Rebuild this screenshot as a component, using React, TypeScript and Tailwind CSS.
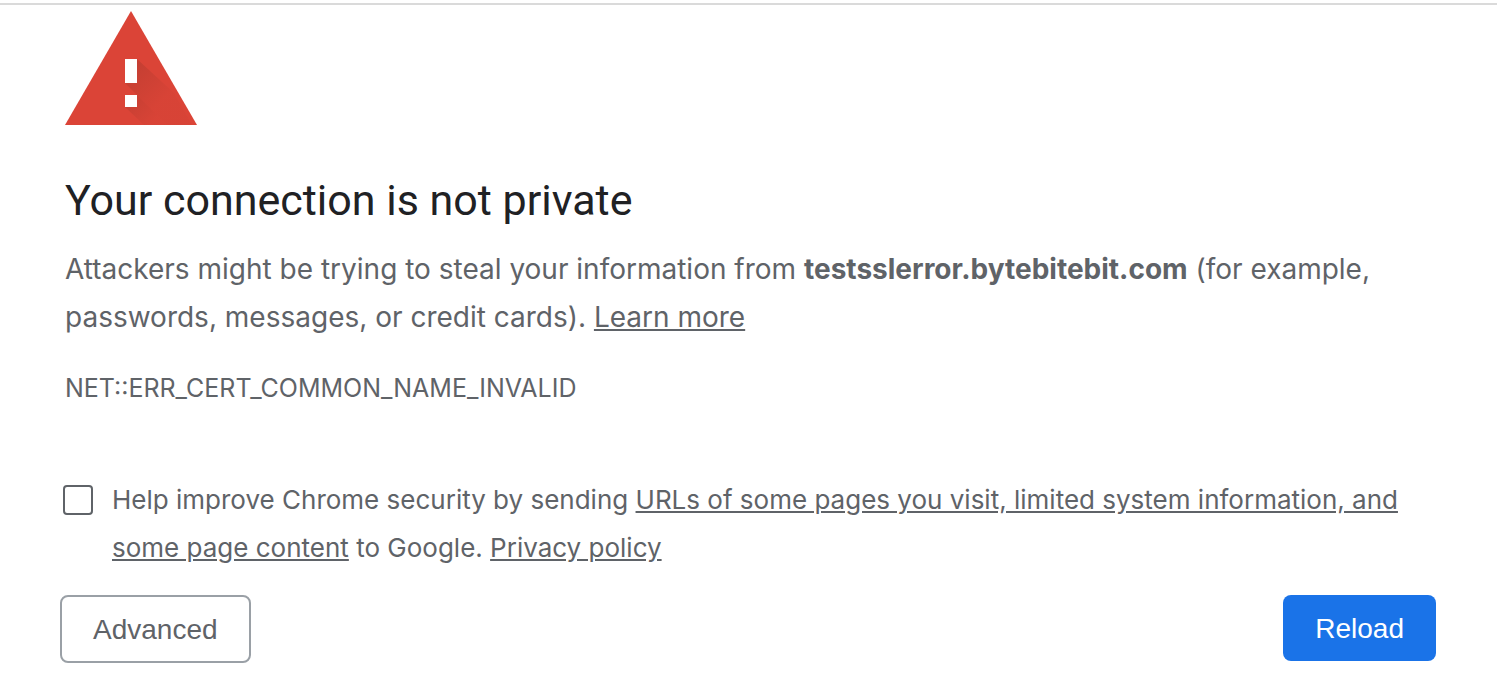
export default function App() {
  return (
    <div className="min-h-screen bg-white pt-[3px] font-['Inter',sans-serif] text-[#5f6368]">
      <main className="border-t-2 border-[#dadada] pl-[60px] pr-[61px] pt-[6px]">
        <div className="pl-[5px]">
          <svg className="h-[114px] w-[132px]" viewBox="0 0 132 114" role="img" aria-label="Warning">
            <defs>
              <linearGradient id="shade" gradientUnits="userSpaceOnUse" x1="66" y1="60" x2="96" y2="90">
                <stop offset="0" stopColor="#b03a2e" stopOpacity="0.5" />
                <stop offset="1" stopColor="#b03a2e" stopOpacity="0.08" />
              </linearGradient>
              <linearGradient id="shadeDot" gradientUnits="userSpaceOnUse" x1="66" y1="88" x2="88" y2="110">
                <stop offset="0" stopColor="#b03a2e" stopOpacity="0.45" />
                <stop offset="1" stopColor="#b03a2e" stopOpacity="0.05" />
              </linearGradient>
            </defs>
            <path d="M66 0 132 114H0Z" fill="#db4437" />
            <path d="M72 48 109 82 127 114H102L60 72Z" fill="url(#shade)" />
            <path d="M72 84 102 114H79L60 96Z" fill="url(#shadeDot)" />
            <path d="M60 48h12v24H60zM60 84h12v12H60z" fill="#fff" />
          </svg>
          <h1 className="mt-[47px] font-['Roboto',sans-serif] text-[43px] leading-[56px] text-[#202124]">Your connection is not private</h1>
          <p className="mt-[17px] text-[28px] leading-[48px]">
            Attackers might be trying to steal your information from <strong>testsslerror.bytebitebit.com</strong> (for example, passwords, messages, or credit cards).{" "}
            <a href="#learn" className="underline">Learn more</a>
          </p>
          <p className="mt-[23px] text-[25px] leading-[48px]">NET::ERR_CERT_COMMON_NAME_INVALID</p>
        </div>
        <div className="mt-16 flex pl-[3px]">
          <input id="help" type="checkbox" className="mt-[9px] size-[30px] shrink-0 appearance-none rounded-[4px] border-2 border-[#5f6368]" />
          <label htmlFor="help" className="ml-[19px] text-[26px] leading-[48px]">
            Help improve Chrome security by sending <a href="#data" className="underline">URLs of some pages you visit, limited system information, and some page content</a> to Google.{" "}
            <a href="#privacy" className="underline">Privacy policy</a>
          </label>
        </div>
        <div className="mt-[23px] flex items-start justify-between font-['Liberation_Sans',sans-serif] text-[28px]">
          <button className="h-[68px] rounded-lg border-2 border-[#9aa0a6] px-[31px] pt-[2px]">Advanced</button>
          <button className="h-[66px] rounded-lg bg-[#1a73e8] px-8 pt-[2px] text-white">Reload</button>
        </div>
      </main>
    </div>
  );
}
